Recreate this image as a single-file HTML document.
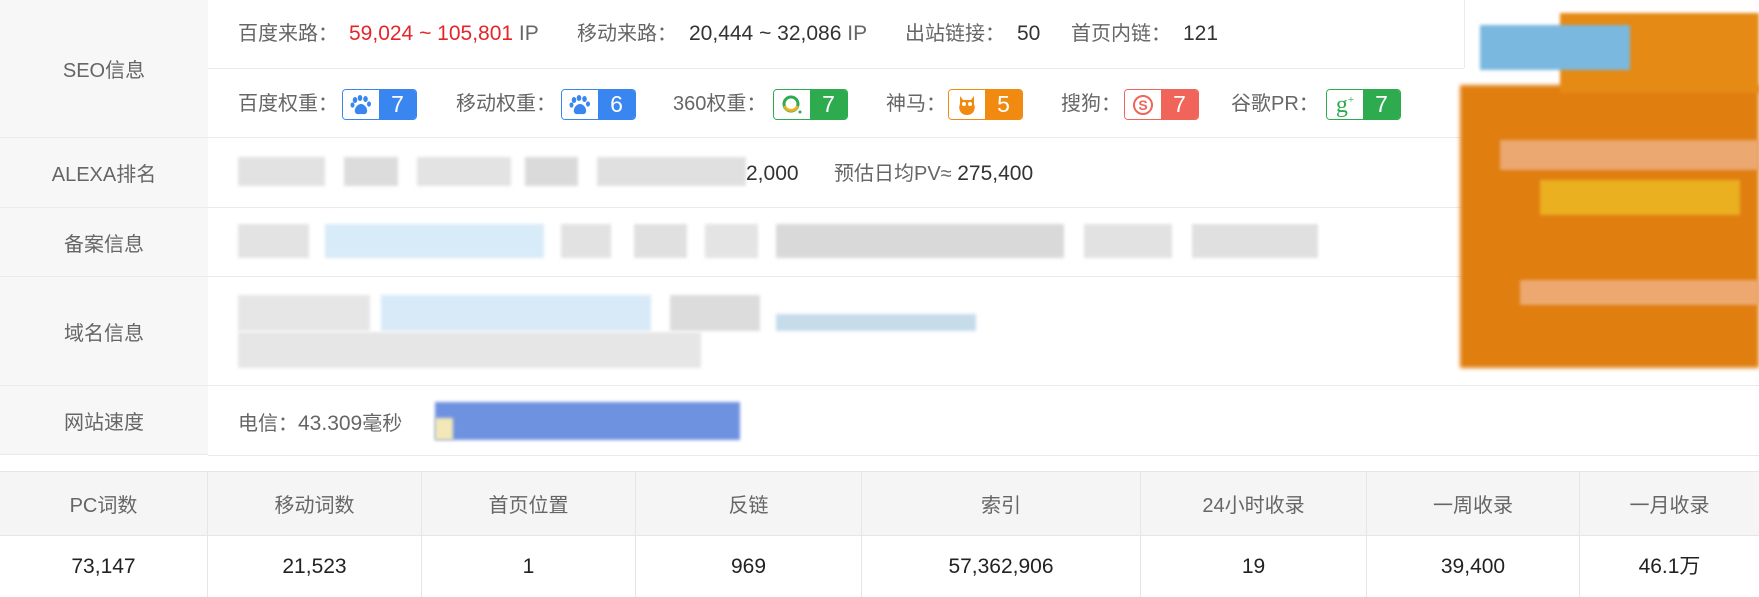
<!DOCTYPE html>
<html><head><meta charset="utf-8"><style>
*{margin:0;padding:0;box-sizing:border-box}
body{width:1759px;height:597px;overflow:hidden;background:#fff;font-family:"Liberation Sans","Noto Sans CJK SC",sans-serif;font-size:20px;color:#333;position:relative}
.a{position:absolute;white-space:nowrap;line-height:24px;height:24px}
.n{font-size:21px}
.lab{position:absolute;left:0;width:208px;background:#f7f7f7;color:#666;display:flex;align-items:center;justify-content:center;border-bottom:1px solid #ebebeb}
.hl{position:absolute;height:1px;background:#ebebeb}
.g{color:#666}
.r{color:#e4262b}
.bd{position:absolute;top:89px;width:75px;height:31px;border:1.5px solid;border-radius:4px;display:flex;overflow:hidden}
.bd i{width:36px;background:#fff;display:flex;align-items:center;justify-content:center;font-style:normal}
.bd b{flex:1;color:#fff;font-weight:normal;font-size:23px;display:flex;align-items:center;justify-content:center}
.bl{position:absolute;filter:blur(1.5px)}
.th{position:absolute;top:471px;height:65px;background:#f5f5f5;color:#666;display:flex;align-items:center;justify-content:center;border-right:1px solid #e6e6e6;border-bottom:1px solid #e6e6e6;border-top:1px solid #e6e6e6}
.td{position:absolute;top:536px;height:61px;color:#222;display:flex;align-items:center;justify-content:center;border-right:1px solid #e6e6e6;font-size:21px;line-height:24px}
</style></head><body>
<div class="lab" style="top:0;height:138px">SEO信息</div>
<div class="lab" style="top:138px;height:70px">ALEXA排名</div>
<div class="lab" style="top:208px;height:69px">备案信息</div>
<div class="lab" style="top:277px;height:109px">域名信息</div>
<div class="lab" style="top:386px;height:69px">网站速度</div>
<div class="hl" style="left:208px;top:68px;width:1256px"></div>
<div class="hl" style="left:208px;top:137px;width:1256px"></div>
<div class="hl" style="left:208px;top:207px;width:1256px"></div>
<div class="hl" style="left:208px;top:276px;width:1256px"></div>
<div class="hl" style="left:208px;top:385px;width:1551px"></div>
<div class="hl" style="left:208px;top:455px;width:1551px"></div>
<div style="position:absolute;left:1464px;top:0;width:1px;height:68px;background:#ebebeb"></div>

<div class="a g" style="left:238px;top:22px">百度来路：</div>
<div class="a r n" style="left:349px;top:22px">59,024 ~ 105,801 <span class="g">IP</span></div>
<div class="a g" style="left:577px;top:22px">移动来路：</div>
<div class="a n" style="left:689px;top:22px">20,444 ~ 32,086 <span class="g">IP</span></div>
<div class="a g" style="left:905px;top:22px">出站链接：</div>
<div class="a n" style="left:1017px;top:22px">50</div>
<div class="a g" style="left:1071px;top:22px">首页内链：</div>
<div class="a n" style="left:1183px;top:22px">121</div>

<div class="a g" style="left:238px;top:92px">百度权重：</div>
<div class="bd" style="left:342px;border-color:#3a86f0"><i><svg width="22" height="20" viewBox="0 0 22 20"><g fill="#3a86f0"><ellipse cx="5" cy="5" rx="2.3" ry="3"/><ellipse cx="10" cy="3" rx="2.3" ry="3"/><ellipse cx="15.5" cy="4" rx="2.3" ry="3"/><ellipse cx="19" cy="9" rx="2" ry="2.6"/><ellipse cx="2.5" cy="10" rx="2" ry="2.6"/><path d="M11 9c-4 0-7 5-6 8s4 2 6 2 5 1 6-2-2-8-6-8z"/></g></svg></i><b style="background:#3a86f0">7</b></div>
<div class="a g" style="left:456px;top:92px">移动权重：</div>
<div class="bd" style="left:561px;border-color:#3a86f0"><i><svg width="22" height="20" viewBox="0 0 22 20"><g fill="#3a86f0"><ellipse cx="5" cy="5" rx="2.3" ry="3"/><ellipse cx="10" cy="3" rx="2.3" ry="3"/><ellipse cx="15.5" cy="4" rx="2.3" ry="3"/><ellipse cx="19" cy="9" rx="2" ry="2.6"/><ellipse cx="2.5" cy="10" rx="2" ry="2.6"/><path d="M11 9c-4 0-7 5-6 8s4 2 6 2 5 1 6-2-2-8-6-8z"/></g></svg></i><b style="background:#3a86f0">6</b></div>
<div class="a g" style="left:673px;top:92px">360权重：</div>
<div class="bd" style="left:773px;border-color:#2eaa4f"><i><svg width="22" height="22" viewBox="0 0 22 22"><circle cx="10" cy="10" r="7" fill="none" stroke="#2eaa4f" stroke-width="3"/><path d="M3.5 12a7 7 0 0 0 13 0" fill="none" stroke="#f0b020" stroke-width="3"/><circle cx="19" cy="18" r="1.5" fill="#2eaa4f"/></svg></i><b style="background:#2eaa4f">7</b></div>
<div class="a g" style="left:886px;top:92px">神马：</div>
<div class="bd" style="left:948px;border-color:#f08a10"><i><svg width="20" height="22" viewBox="0 0 20 22"><path d="M3 2l3 4h8l3-4v8c2 4 0 11-7 11S1 14 3 10z" fill="#f08a10"/><circle cx="7" cy="10" r="2" fill="#fff"/><circle cx="13" cy="10" r="2" fill="#fff"/></svg></i><b style="background:#f08a10">5</b></div>
<div class="a g" style="left:1061px;top:92px">搜狗：</div>
<div class="bd" style="left:1124px;border-color:#f0645a"><i><svg width="22" height="22" viewBox="0 0 22 22"><circle cx="11" cy="11" r="9" fill="none" stroke="#f0645a" stroke-width="2"/><text x="11" y="16" text-anchor="middle" font-size="14" font-weight="bold" fill="#f0645a" font-family="Liberation Sans">S</text></svg></i><b style="background:#f0645a">7</b></div>
<div class="a g" style="left:1231px;top:92px">谷歌PR：</div>
<div class="bd" style="left:1326px;border-color:#2eaa4f"><i><span style="color:#2eaa4f;font-family:'Liberation Serif',serif;font-size:24px;line-height:1">g<sup style="font-size:11px">+</sup></span></i><b style="background:#2eaa4f">7</b></div>

<div class="bl" style="left:238px;top:157px;width:87px;height:29px;background:#e2e2e2"></div>
<div class="bl" style="left:344px;top:157px;width:54px;height:29px;background:#dcdcdc"></div>
<div class="bl" style="left:417px;top:157px;width:94px;height:29px;background:#e3e3e3"></div>
<div class="bl" style="left:525px;top:157px;width:53px;height:29px;background:#dadada"></div>
<div class="bl" style="left:597px;top:157px;width:149px;height:29px;background:#e0e0e0"></div>
<div class="a n" style="left:746px;top:162px">2,000</div>
<div class="a g" style="left:834px;top:162px">预估日均PV≈ <span class="n" style="color:#333">275,400</span></div>

<div class="bl" style="left:238px;top:224px;width:71px;height:34px;background:#e3e3e3"></div>
<div class="bl" style="left:325px;top:224px;width:219px;height:34px;background:#d8ebf8"></div>
<div class="bl" style="left:561px;top:224px;width:50px;height:34px;background:#e2e2e2"></div>
<div class="bl" style="left:634px;top:224px;width:53px;height:34px;background:#e0e0e0"></div>
<div class="bl" style="left:705px;top:224px;width:53px;height:34px;background:#e4e4e4"></div>
<div class="bl" style="left:776px;top:224px;width:288px;height:34px;background:#d9d9d9"></div>
<div class="bl" style="left:1084px;top:224px;width:88px;height:34px;background:#e2e2e2"></div>
<div class="bl" style="left:1192px;top:224px;width:126px;height:34px;background:#e0e0e0"></div>

<div class="bl" style="left:238px;top:295px;width:132px;height:36px;background:#e6e6e6"></div>
<div class="bl" style="left:381px;top:295px;width:270px;height:36px;background:#d8eaf8"></div>
<div class="bl" style="left:670px;top:295px;width:90px;height:36px;background:#dcdcdc"></div>
<div class="bl" style="left:776px;top:314px;width:200px;height:17px;background:#c6dceb"></div>
<div class="bl" style="left:238px;top:332px;width:463px;height:36px;background:#e6e6e6"></div>

<div class="a g" style="left:238px;top:412px;width:177px;overflow:hidden">电信：<span class="n">43.309</span>毫秒</div>
<div class="bl" style="left:435px;top:402px;width:305px;height:38px;background:#6f92e0"></div>
<div class="bl" style="left:435px;top:418px;width:18px;height:22px;background:#f2e8b8"></div>

<div class="bl" style="left:1460px;top:85px;width:299px;height:283px;background:#e07e10;filter:blur(2px)"></div>
<div class="bl" style="left:1560px;top:13px;width:199px;height:80px;background:#e58a14"></div>
<div class="bl" style="left:1480px;top:25px;width:150px;height:45px;background:#7ab8df"></div>
<div class="bl" style="left:1500px;top:140px;width:259px;height:30px;background:#eba870"></div>
<div class="bl" style="left:1540px;top:180px;width:200px;height:35px;background:#eab020"></div>
<div class="bl" style="left:1520px;top:280px;width:239px;height:25px;background:#eda870"></div>

<div class="th" style="left:0;width:208px">PC词数</div>
<div class="th" style="left:208px;width:214px">移动词数</div>
<div class="th" style="left:422px;width:214px">首页位置</div>
<div class="th" style="left:636px;width:226px">反链</div>
<div class="th" style="left:862px;width:279px">索引</div>
<div class="th" style="left:1141px;width:226px">24小时收录</div>
<div class="th" style="left:1367px;width:213px">一周收录</div>
<div class="th" style="left:1580px;width:179px;border-right:0">一月收录</div>
<div class="td" style="left:0;width:208px">73,147</div>
<div class="td" style="left:208px;width:214px">21,523</div>
<div class="td" style="left:422px;width:214px">1</div>
<div class="td" style="left:636px;width:226px">969</div>
<div class="td" style="left:862px;width:279px">57,362,906</div>
<div class="td" style="left:1141px;width:226px">19</div>
<div class="td" style="left:1367px;width:213px">39,400</div>
<div class="td" style="left:1580px;width:179px;border-right:0">46.1万</div>
</body></html>
